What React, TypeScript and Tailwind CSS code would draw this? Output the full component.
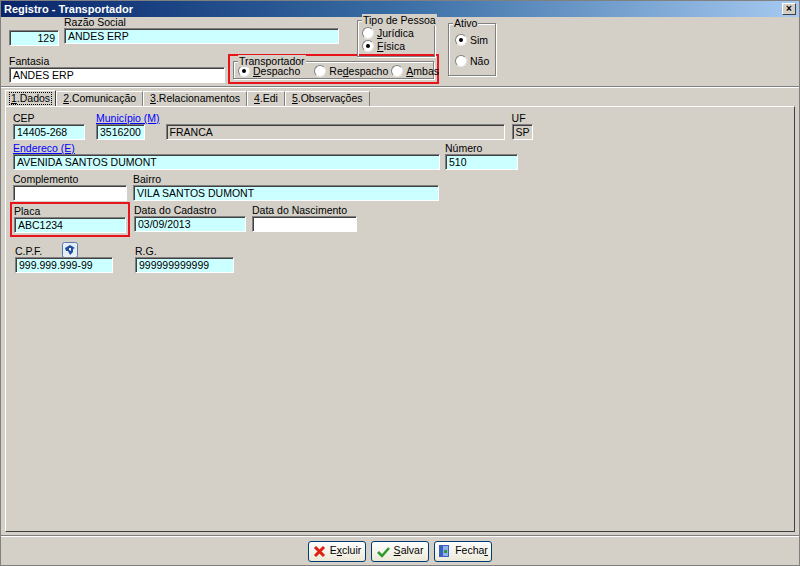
import { ReactNode } from "react";

const font = { fontFamily: '"Liberation Sans", Arial, sans-serif' };

const Input = ({ w, value = "", bg = "cyan", right }: { w: number; value?: string; bg?: "cyan" | "white" | "gray"; right?: boolean }) => (
  <div
    className={
      "h-[16px] border border-t-[#808080] border-l-[#808080] border-b-white border-r-white shadow-[inset_1px_1px_0_#404040] pl-[3px] pr-[3px] text-[10.5px] leading-[14px] text-black whitespace-nowrap overflow-hidden " +
      (bg === "cyan" ? "bg-[#ccffff]" : bg === "white" ? "bg-white" : "bg-[#d4d0c8]") +
      (right ? " text-right" : "")
    }
    style={{ width: w }}
  >
    {value}
  </div>
);

const Field = ({ label, w, value, bg, ml, link, right, extra }: { label?: string; w: number; value?: string; bg?: "cyan" | "white" | "gray"; ml: number; link?: boolean; right?: boolean; extra?: ReactNode }) => (
  <div className="flex flex-col shrink-0" style={{ marginLeft: ml }}>
    <div className={"h-[11px] text-[10.5px] leading-[11px] flex items-end gap-[20px] whitespace-nowrap " + (link ? "text-[#0000ff] underline" : "text-black")}>
      {label}
      {extra}
    </div>
    <Input w={w} value={value} bg={bg} right={right} />
  </div>
);

const Radio = ({ on, children }: { on?: boolean; children: ReactNode }) => (
  <div className="flex items-center gap-[3px] text-[10.5px] leading-[12px] whitespace-nowrap">
    <div className="w-[12px] h-[12px] shrink-0 rounded-full bg-white border border-t-[#808080] border-l-[#808080] border-b-[#e8e8e8] border-r-[#e8e8e8] flex items-center justify-center">
      {on && <div className="w-[4px] h-[4px] rounded-full bg-black" />}
    </div>
    <span>{children}</span>
  </div>
);

const Group = ({ title, w, h, children, cls = "" }: { title: string; w: number; h: number; children: ReactNode; cls?: string }) => (
  <div className={"relative shrink-0 border border-[#808080] shadow-[1px_1px_0_white,inset_1px_1px_0_white] " + cls} style={{ width: w, height: h }}>
    <span className="absolute -top-[7px] left-[4px] bg-[#d4d0c8] px-[1px] text-[10.5px] leading-[12px] whitespace-nowrap">{title}</span>
    {children}
  </div>
);

const Btn = ({ icon, children }: { icon: ReactNode; children: ReactNode }) => (
  <div className="w-[58px] h-[21px] rounded-[3px] border border-[#003c74] bg-gradient-to-b from-white to-[#ece9d8] flex items-center justify-center gap-[4px] text-[10.5px]">
    {icon}
    <span className="whitespace-nowrap">{children}</span>
  </div>
);

export default function App() {
  return (
    <div className="w-[800px] h-[566px] bg-[#d4d0c8] flex flex-col text-black border border-[#808080]" style={font}>
      <div className="h-[16px] shrink-0 bg-gradient-to-r from-[#0a246a] via-[#3a6ea5] to-[#a6caf0] flex items-center justify-between pl-[3px] pr-[3px]">
        <span className="text-white font-bold text-[11px]">Registro - Transportador</span>
        <div className="w-[14px] h-[12px] bg-[#d4d0c8] border border-t-white border-l-white border-b-[#404040] border-r-[#404040] flex items-center justify-center text-[10px] font-bold leading-none">×</div>
      </div>

      <div className="flex h-[68px] shrink-0">
        <div className="flex flex-col ml-[8px]">
          <div className="flex h-[39px]">
            <div className="mt-[13px]"><Input w={50} value="129" right /></div>
            <Field ml={5} w={275} label="Razão Social" value="ANDES ERP" />
            <Group title="Tipo de Pessoa" w={78} h={37} cls="ml-[18px] mt-[3px]">
              <div className="flex flex-col gap-[1px] pl-[4px] pt-[6px]">
                <Radio><u>J</u>urídica</Radio>
                <Radio on><u>F</u>ísica</Radio>
              </div>
            </Group>
          </div>
          <div className="flex">
            <Field ml={0} w={216} label="Fantasia" value="ANDES ERP" bg="white" />
            <div className="ml-[3px] -mt-[2px] w-[211px] h-[30px] border-2 border-[#e8141c] p-[3px] pt-[5px]">
              <Group title="Transportador" w={201} h={18}>
                <div className="flex items-center gap-[14px] pl-[4px] pt-[3px]">
                  <Radio on><u>D</u>espacho</Radio>
                  <div className="flex gap-[3px]">
                    <Radio>Re<u>d</u>espacho</Radio>
                    <Radio><u>A</u>mbas</Radio>
                  </div>
                </div>
              </Group>
            </div>
          </div>
        </div>
        <Group title="Ativo" w={48} h={53} cls="ml-[9px] mt-[6px]">
          <div className="flex flex-col gap-[9px] pl-[6px] pt-[10px]">
            <Radio on>Sim</Radio>
            <Radio>Não</Radio>
          </div>
        </Group>
      </div>

      <div className="h-[2px] shrink-0 border-t border-[#808080] border-b border-b-white mt-[1px]" />

      <div className="flex mx-[4px] mt-[2px] h-[16px] shrink-0 text-[10.5px] whitespace-nowrap">
        <div className="px-[3px] h-[16px] border border-b-0 border-t-white border-l-white border-r-[#404040] bg-[#d4d0c8] relative z-10 flex items-center">
          <span className="border border-dotted border-black px-[1px] leading-[11px]"><u>1</u>.Dados</span>
        </div>
        {["2.Comunicação", "3.Relacionamentos", "4.Edi", "5.Observações"].map((t) => (
          <div key={t} className="px-[6px] h-[15px] mt-[1px] border border-b-0 border-t-white border-l-white border-r-[#808080] flex items-center">
            <span><u>{t[0]}</u>{t.slice(1)}</span>
          </div>
        ))}
      </div>

      <div className="flex-1 mx-[4px] border border-t-white border-l-white border-b-[#404040] border-r-[#404040] flex flex-col">
        <div className="flex mt-[6px]">
          <Field ml={7} w={72} label="CEP" value="14405-268" />
          <Field ml={11} w={49} label="Município (M)" value="3516200" link />
          <Field ml={6} w={339} value="FRANCA" bg="gray" />
          <Field ml={7} w={21} label="UF" value="SP" bg="gray" />
        </div>
        <div className="flex mt-[3px]">
          <Field ml={7} w={427} label="Endereco (E)" value="AVENIDA SANTOS DUMONT" link />
          <Field ml={5} w={73} label="Número" value="510" />
        </div>
        <div className="flex mt-[4px]">
          <Field ml={7} w={114} label="Complemento" bg="white" />
          <Field ml={6} w={306} label="Bairro" value="VILA SANTOS DUMONT" />
        </div>
        <div className="flex mt-[4px]">
          <div className="ml-[4px] -mt-[3px] w-[120px] h-[35px] border-2 border-[#e8141c] pl-[2px] pt-[2px]">
            <Field ml={0} w={112} label="Placa" value="ABC1234" />
          </div>
          <Field ml={4} w={112} label="Data do Cadastro" value="03/09/2013" />
          <Field ml={6} w={105} label="Data do Nascimento" bg="white" />
        </div>
        <div className="flex mt-[9px]">
          <Field
            ml={9}
            w={98}
            label="C.P.F."
            value="999.999.999-99"
            extra={
              <svg width="16" height="16" viewBox="0 0 16 16" className="mb-[-1px]">
                <rect x="0.5" y="0.5" width="15" height="15" rx="2" fill="#e8eef8" stroke="#5a78b0" />
                <path d="M3 6 L8 3 L13 6 L11 7 L11 10 L8 13 L6 9 L4 9 Z" fill="#1f4f9a" />
                <path d="M7 6 L9 6 L9 9 L7 8 Z" fill="#ffffff" />
              </svg>
            }
          />
          <Field ml={22} w={99} label="R.G." value="999999999999" />
        </div>
      </div>

      <div className="h-[2px] shrink-0 border-t border-[#808080] border-b border-b-white mt-[3px]" />
      <div className="h-[28px] shrink-0 flex items-center justify-center gap-[5px]">
        <Btn icon={<svg width="13" height="13" viewBox="0 0 13 13"><path d="M2 2 L11 11 M11 2 L2 11" stroke="#e02010" strokeWidth="3" /></svg>}>E<u>x</u>cluir</Btn>
        <Btn icon={<svg width="13" height="13" viewBox="0 0 13 13"><path d="M1 7 L5 11 L12 3" stroke="#2a9a2a" strokeWidth="2.5" fill="none" /></svg>}><u>S</u>alvar</Btn>
        <Btn icon={<svg width="13" height="14" viewBox="0 0 13 14"><rect x="1" y="1" width="10" height="12" fill="#3a5fc0" /><rect x="5" y="2" width="5" height="10" fill="#8fb0f0" /><rect x="6" y="6" width="3" height="3" fill="#2a9a2a" /></svg>}>Fecha<u>r</u></Btn>
      </div>
    </div>
  );
}
